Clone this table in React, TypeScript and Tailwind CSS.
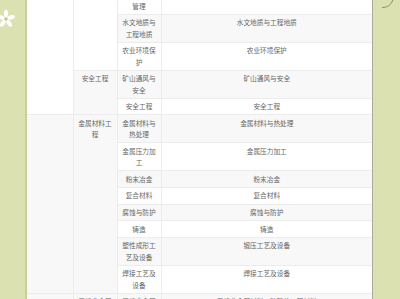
import React from "react";

type Cell = { text: string; rowSpan?: number; col: 1 | 2 | 3 | 4 };
type Row = { gray: boolean; cells: Cell[] };

const rows: Row[] = [
  { gray: false, cells: [{ col: 1, text: "", rowSpan: 5 }, { col: 2, text: "", rowSpan: 3 }, { col: 3, text: "环境规划与管理" }, { col: 4, text: "环境规划与管理" }] },
  { gray: true, cells: [{ col: 3, text: "水文地质与工程地质" }, { col: 4, text: "水文地质与工程地质" }] },
  { gray: false, cells: [{ col: 3, text: "农业环境保护" }, { col: 4, text: "农业环境保护" }] },
  { gray: true, cells: [{ col: 2, text: "安全工程", rowSpan: 2 }, { col: 3, text: "矿山通风与安全" }, { col: 4, text: "矿山通风与安全" }] },
  { gray: false, cells: [{ col: 3, text: "安全工程" }, { col: 4, text: "安全工程" }] },
  { gray: true, cells: [{ col: 1, text: "", rowSpan: 8 }, { col: 2, text: "金属材料工程", rowSpan: 8 }, { col: 3, text: "金属材料与热处理" }, { col: 4, text: "金属材料与热处理" }] },
  { gray: false, cells: [{ col: 3, text: "金属压力加工" }, { col: 4, text: "金属压力加工" }] },
  { gray: true, cells: [{ col: 3, text: "粉末冶金" }, { col: 4, text: "粉末冶金" }] },
  { gray: false, cells: [{ col: 3, text: "复合材料" }, { col: 4, text: "复合材料" }] },
  { gray: true, cells: [{ col: 3, text: "腐蚀与防护" }, { col: 4, text: "腐蚀与防护" }] },
  { gray: false, cells: [{ col: 3, text: "铸造" }, { col: 4, text: "铸造" }] },
  { gray: true, cells: [{ col: 3, text: "塑性成形工艺及设备" }, { col: 4, text: "锻压工艺及设备" }] },
  { gray: false, cells: [{ col: 3, text: "焊接工艺及设备" }, { col: 4, text: "焊接工艺及设备" }] },
  { gray: true, cells: [{ col: 1, text: "" }, { col: 2, text: "无机非金属材料工程" }, { col: 3, text: "无机非金属材料" }, { col: 4, text: "无机非金属材料、硅酸盐工程材料" }] },
];

function Flower() {
  const petals = [0, 72, 144, 216, 288];
  return (
    <svg className="absolute left-0 top-[8px]" width="22" height="22" viewBox="-6 -11 22 22">
      {petals.map((a) => (
        <ellipse key={a} cx="0" cy="-5.4" rx="2.1" ry="3.9" fill="#ffffff" transform={`rotate(${a})`} />
      ))}
      <circle cx="0" cy="0" r="1.4" fill="#bfc39a" />
    </svg>
  );
}

export default function App() {
  return (
    <div
      className="flex h-[299px] w-[400px] overflow-hidden bg-white"
      style={{ fontFamily: '"Noto Sans CJK SC", "Noto Sans", sans-serif' }}
    >
      <div className="relative w-[25px] shrink-0 bg-[#dce1b1]">
        <Flower />
      </div>
      <div className="w-[2px] shrink-0 bg-[#c9cf9b]" />
      <div className="w-[345px] shrink-0 overflow-hidden">
        <table className="-mt-[14px] w-[345px] table-fixed border-collapse text-[6.67px] leading-[11.33px] text-[#666666]">
          <colgroup>
            <col className="w-[46px]" />
            <col className="w-[44px]" />
            <col className="w-[44px]" />
            <col className="w-[211px]" />
          </colgroup>
          <tbody>
            {rows.map((r, i) => (
              <tr key={i} className={r.gray ? "bg-[#f8f8f8]" : "bg-white"}>
                {r.cells.map((c) => (
                  <td
                    key={c.col}
                    rowSpan={c.rowSpan}
                    className={
                      "border border-[#ececec] px-[4px] pb-[1.8px] pt-[2.5px] text-center align-top " +
                      (c.col === 1 ? "border-l-0 " : "") +
                      (c.col === 4 ? "border-r-0 " : "")
                    }
                  >
                    {c.text}
                  </td>
                ))}
              </tr>
            ))}
          </tbody>
        </table>
      </div>
      <div className="w-px shrink-0 bg-[#a9a9a2]" />
      <div className="relative flex-1 bg-[#dce1b1]">
        <svg className="absolute left-0 top-0" width="27" height="12" viewBox="373 0 27 12">
          <path d="M382 7.6 Q390 7.6 393 0" fill="none" stroke="#8d9262" strokeWidth="1" />
        </svg>
      </div>
    </div>
  );
}
